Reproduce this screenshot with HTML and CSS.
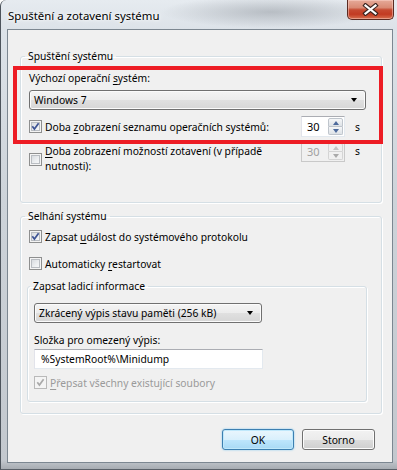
FILE: index.html
```html
<!DOCTYPE html>
<html lang="cs">
  <head>
    <meta charset="UTF-8" />
    <title>Spuštění a zotavení systému</title>
    <link rel="stylesheet" href="styles.css">
  </head>
  <body>
    <div class="window">
      <div class="titlebar">
        <span class="title">Spuštění a zotavení systému</span>
        <button class="close-btn" type="button">
          <svg width="17" height="13" viewBox="0 0 17 13">
            <path d="M3.5 2.5 L13.5 10.5 M3.5 10.5 L13.5 2.5" stroke="#3b2420" stroke-width="4.4" stroke-linecap="square" />
            <path d="M3.5 2.5 L13.5 10.5 M3.5 10.5 L13.5 2.5" stroke="#fff" stroke-width="2.2" stroke-linecap="square" />
          </svg>
        </button>
      </div>

      <div class="client">
        <fieldset class="group startup">
          <legend>Spuštění systému</legend>
          <div class="field-label">Výchozí operační <u>s</u>ystém:</div>
          <div class="combo combo-os">
            <span>Windows 7</span>
            <span class="arrow"></span>
          </div>

          <div class="timeout-row">
            <label class="check">
              <span class="box checked">
                <svg width="11" height="11" viewBox="0 0 11 11"><path d="M2.3 5.2 L4.4 8 L8.6 2.2" fill="none" stroke="#3d5394" stroke-width="1.7" /></svg>
              </span>
              <span>Doba <u>z</u>obrazení seznamu operačních systémů:</span>
            </label>
            <div class="spin">
              <span class="spin-value">30</span>
              <span class="spin-buttons">
                <span class="spin-up"></span>
                <span class="spin-down"></span>
              </span>
            </div>
            <span class="unit">s</span>
          </div>

          <div class="timeout-row recovery">
            <label class="check">
              <span class="box"></span>
              <span><u>D</u>oba zobrazení možností zotavení (v případě<br>nutnosti):</span>
            </label>
            <div class="spin disabled">
              <span class="spin-value">30</span>
              <span class="spin-buttons">
                <span class="spin-up"></span>
                <span class="spin-down"></span>
              </span>
            </div>
            <span class="unit">s</span>
          </div>
        </fieldset>

        <fieldset class="group failure">
          <legend>Selhání systému</legend>
          <label class="check">
            <span class="box checked">
              <svg width="11" height="11" viewBox="0 0 11 11"><path d="M2.3 5.2 L4.4 8 L8.6 2.2" fill="none" stroke="#3d5394" stroke-width="1.7" /></svg>
            </span>
            <span>Zapsat <u>u</u>dálost do systémového protokolu</span>
          </label>
          <label class="check restart">
            <span class="box"></span>
            <span>Automaticky <u>r</u>estartovat</span>
          </label>

          <fieldset class="group debug">
            <legend>Zapsat ladicí informace</legend>
            <div class="combo combo-dump">
              <span>Zkrácený výpis stavu paměti (256 kB)</span>
              <span class="arrow"></span>
            </div>
            <div class="field-label dump-label">Složka pro omezený výpis:</div>
            <div class="textbox">%SystemRoot%\Minidump</div>
            <label class="check overwrite disabled">
              <span class="box checked">
                <svg width="11" height="11" viewBox="0 0 11 11"><path d="M2.3 5.2 L4.4 8 L8.6 2.2" fill="none" stroke="#a9a9a9" stroke-width="1.7" /></svg>
              </span>
              <span><u>P</u>řepsat všechny existující soubory</span>
            </label>
          </fieldset>
        </fieldset>

        <div class="buttons">
          <button class="btn default" type="button">OK</button>
          <button class="btn" type="button">Storno</button>
        </div>
      </div>

      <!-- red marker drawn over the first group -->
      <div class="highlight"></div>
    </div>
  </body>
</html>
```

FILE: styles.css
```css
* {
  box-sizing: border-box;
}
body {
  margin: 0;
  width: 397px;
  height: 470px;
  overflow: hidden;
  background: #fff;
  font-family: "Noto Sans", "DejaVu Sans", sans-serif;
  font-size: 10.3px;
  color: #000;
}
u {
  text-decoration-thickness: 1px;
  text-underline-offset: 2px;
}

/* window frame (aero glass) */
.window {
  position: relative;
  width: 397px;
  height: 470px;
  border-left: 1px solid #4d545c;
  border-bottom: 1px solid #5a6068;
  border-radius: 6px 0 0 0;
  background:
    radial-gradient(ellipse 110px 16px at 270px 12px, rgba(120, 126, 134, 0.4), rgba(120, 126, 134, 0)),
    linear-gradient(to bottom, #e6ebf0 0, #dde3e9 28px, #cdd3d9 200px, #c3c8ce 460px, #a4a9af 470px);
}
.titlebar {
  height: 29px;
  display: flex;
  align-items: flex-start;
  justify-content: space-between;
}
.title {
  padding: 8px 0 0 7px;
  font-size: 11.4px;
  line-height: 15px;
  text-shadow: 0 0 6px #fff, 0 0 3px #fff;
}
.close-btn {
  width: 47px;
  height: 20px;
  margin-right: 3px;
  padding: 0;
  border: 1px solid #5a2b22;
  border-top: none;
  border-radius: 0 0 5px 5px;
  background: linear-gradient(to bottom, #e6aa99 0, #d98a74 40%, #c64a31 52%, #c23b22 75%, #d7704f 100%);
  box-shadow: inset 0 0 0 1px rgba(255, 220, 210, 0.45);
  display: flex;
  align-items: center;
  justify-content: center;
}

/* client area */
.client {
  height: 434px;
  margin-left: 6px;
  margin-right: 4px;
  border: 1px solid #7c8791;
  background: #f0f0f0;
  padding: 19px 0 0 12px;
}
fieldset.group {
  margin: 0;
  width: 362px;
  border: 1px solid #d5dfe5;
  border-radius: 3px;
  box-shadow: inset 1px 1px 0 #fff, 1px 1px 0 #fff;
}
legend {
  margin-left: -4px;
  padding: 0 3px;
  line-height: 14px;
}
.startup {
  padding: 8px 15px 28px 8px;
}
.failure {
  margin-top: 6px !important;
  padding: 5px 14px 11px 8px;
}
.debug {
  width: auto !important;
  margin: 7px 0 0 -2px !important;
  padding: 10px 6px 10px 6px;
}
.field-label {
  line-height: 15px;
}

/* checkbox */
.check {
  display: flex;
  align-items: center;
  height: 17px;
}
.box {
  flex: none;
  width: 13px;
  height: 13px;
  margin-right: 3px;
  border: 1px solid #8e8f8f;
  background: linear-gradient(135deg, #cfd3d8 0, #eef0f2 60%, #fbfbfb 100%);
  box-shadow: inset 0 0 0 1px #f4f4f4, inset 0 0 0 2px #b9bdc2;
  display: flex;
  align-items: center;
  justify-content: center;
}
.box svg {
  display: block;
}
.check.disabled {
  color: #9a9a9a;
}
.check.disabled .box {
  border-color: #b9b9b9;
  background: #f4f4f4;
  box-shadow: none;
}
.restart {
  margin-top: 10px;
}
.overwrite {
  margin-top: 5px;
}

/* drop-down list */
.combo {
  height: 20px;
  display: flex;
  align-items: center;
  justify-content: space-between;
  padding: 0 8px 0 4px;
  border: 1px solid #707070;
  border-radius: 3px;
  background: linear-gradient(to bottom, #f4f4f4 0, #ececec 50%, #e0e0e0 51%, #d6d6d6 100%);
  box-shadow: inset 0 0 0 1px #fbfbfb;
}
.combo-os {
  margin-top: 4px;
}
.combo-dump {
  width: 228px;
}
.arrow {
  width: 0;
  height: 0;
  border-left: 3.5px solid transparent;
  border-right: 3.5px solid transparent;
  border-top: 4px solid #000;
}

/* timeout rows */
.timeout-row {
  display: flex;
  align-items: center;
  margin-top: 6px;
}
.timeout-row .check {
  flex: 1;
  height: auto;
}
.timeout-row.recovery {
  margin-top: 4px;
  align-items: flex-start;
}
.recovery .check {
  margin-top: 3px;
  line-height: 15px;
}
.recovery .unit {
  margin-top: 3px;
}
.spin {
  width: 44px;
  height: 21px;
  display: flex;
  align-items: center;
  justify-content: space-between;
  background: #fff;
  border: 1px solid #e3e9ef;
  border-top-color: #abadb3;
  border-left-color: #e2e3ea;
  padding-left: 5px;
  font-size: 11px;
}
.spin-buttons {
  width: 16px;
  height: 19px;
  display: flex;
  flex-direction: column;
  padding: 1px 1px 1px 0;
}
.spin-up,
.spin-down {
  flex: 1;
  display: flex;
  align-items: center;
  justify-content: center;
  border: 1px solid #bfc5cc;
  background: linear-gradient(to bottom, #f6f7f8, #dde2e7);
}
.spin-up {
  border-radius: 2px 2px 0 0;
}
.spin-down {
  border-radius: 0 0 2px 2px;
  border-top: none;
}
.spin-up::after,
.spin-down::after {
  content: "";
  border-left: 3.5px solid transparent;
  border-right: 3.5px solid transparent;
}
.spin-up::after {
  border-bottom: 4px solid #4d6a9c;
}
.spin-down::after {
  border-top: 4px solid #4d6a9c;
}
.spin.disabled {
  background: #f0f0f0;
  border-color: #c9c9c9;
  color: #a0a0a0;
}
.spin.disabled .spin-up,
.spin.disabled .spin-down {
  border-color: #d4d4d4;
  background: #f0f0f0;
}
.spin.disabled .spin-up::after {
  border-bottom-color: #c4c4c4;
}
.spin.disabled .spin-down::after {
  border-top-color: #a9a9a9;
}
.unit {
  width: 11px;
  margin-left: 10px;
}

/* folder edit box */
.dump-label {
  margin-top: 10px;
}
.textbox {
  width: 229px;
  height: 20px;
  margin-top: 1px;
  padding: 1px 0 0 6px;
  line-height: 16px;
  background: #fff;
  border: 1px solid #e3e9ef;
  border-top-color: #abadb3;
  border-left-color: #e2e3ea;
}

/* dialog buttons */
.buttons {
  display: flex;
  justify-content: flex-end;
  gap: 8px;
  margin-top: 15px;
  padding-right: 17px;
}
.btn {
  width: 72px;
  height: 21px;
  padding: 0;
  font-family: inherit;
  font-size: 10.3px;
  color: #000;
  border: 1px solid #707070;
  border-radius: 3px;
  background: linear-gradient(to bottom, #f2f2f2 0, #ebebeb 50%, #dddddd 51%, #cfcfcf 100%);
  box-shadow: inset 0 0 0 1px #fcfcfc;
}
.btn + .btn {
  width: 73px;
}
.btn.default {
  border-color: #3c7fb1;
  background: linear-gradient(to bottom, #eaf6fd 0, #d9f0fc 50%, #bee6fd 51%, #a7d9f5 100%);
  box-shadow: inset 0 0 0 1px #bfe8fb, 0 0 2px #7ac4ee;
}

/* red annotation box */
.highlight {
  position: absolute;
  left: 12px;
  top: 66px;
  width: 370px;
  height: 78px;
  border: 4px solid #ed1c24;
  pointer-events: none;
}
```
